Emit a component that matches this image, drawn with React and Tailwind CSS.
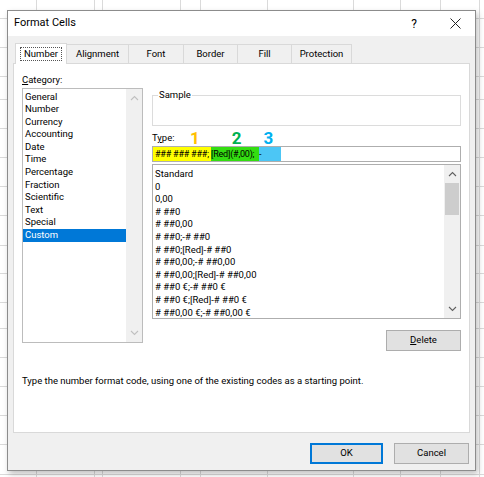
import React from "react";

const categories = [
  "General",
  "Number",
  "Currency",
  "Accounting",
  "Date",
  "Time",
  "Percentage",
  "Fraction",
  "Scientific",
  "Text",
  "Special",
  "Custom",
];

const formats = [
  "Standard",
  "0",
  "0,00",
  "# ##0",
  "# ##0,00",
  "# ##0;-# ##0",
  "# ##0;[Red]-# ##0",
  "# ##0,00;-# ##0,00",
  "# ##0,00;[Red]-# ##0,00",
  "# ##0 €;-# ##0 €",
  "# ##0 €;[Red]-# ##0 €",
  "# ##0,00 €;-# ##0,00 €",
];

const tabs = ["Number", "Alignment", "Font", "Border", "Fill", "Protection"];
const tabWidths = ["w-[52px]", "w-[62px]", "w-[55px]", "w-[54px]", "w-[54px]", "w-[60px]"];

function Chevron({ up, color = "#606060" }) {
  return (
    <svg width="9" height="6" viewBox="0 0 9 6">
      <polyline
        points={up ? "1,5 4.5,1.5 8,5" : "1,1 4.5,4.5 8,1"}
        fill="none"
        stroke={color}
        strokeWidth="1.1"
      />
    </svg>
  );
}

function SheetGrid() {
  const vx = [36, 94, 102, 180, 200, 267, 353, 400, 440, 479];
  const hy = [18, 47, 76, 99, 128, 157, 186, 215, 245, 273, 302, 328, 357, 386, 415, 444, 474];
  return (
    <svg className="absolute inset-0" width="484" height="477">
      {vx.map((x) => (
        <line key={"v" + x} x1={x + 0.5} y1="0" x2={x + 0.5} y2="477" stroke="#dadada" />
      ))}
      {hy.map((y) => (
        <line key={"h" + y} x1="0" y1={y + 0.5} x2="484" y2={y + 0.5} stroke="#dadada" />
      ))}
    </svg>
  );
}

export default function App() {
  return (
    <div
      className="relative w-[484px] h-[477px] bg-white overflow-hidden text-[#000] text-[9.5px]"
      style={{ fontFamily: "Roboto, 'Noto Sans', sans-serif" }}
    >
      <SheetGrid />

      {/* dialog */}
      <div className="absolute left-[7px] top-[10px] w-[469px] h-[461px] bg-[#f0f0f0] border border-[#8c8c8c] shadow-[2px_3px_6px_rgba(0,0,0,0.25)] flex flex-col">
        {/* title bar */}
        <div className="h-[25px] bg-white flex items-center pl-[6px] pr-[14px]">
          <span className="text-[11px]">Format Cells</span>
          <span className="ml-auto text-[12px] mr-[33px]">?</span>
          <svg width="11" height="11" viewBox="0 0 11 11">
            <path d="M0.5 0.5 L10.5 10.5 M10.5 0.5 L0.5 10.5" stroke="#222" strokeWidth="1" />
          </svg>
        </div>

        <div className="px-[5px] pt-[8px] flex flex-col">
          {/* tabs */}
          <div className="flex h-[19px] items-end">
            {tabs.map((t, i) =>
              i === 0 ? (
                <div
                  key={t}
                  className={`${tabWidths[i]} h-[21px] -mb-px bg-white border border-b-0 border-[#d9d9d9] flex items-center justify-center z-10 relative ml-[2px]`}
                >
                  <span className="border border-dotted border-[#555] px-[3px] leading-[12px]">{t}</span>
                </div>
              ) : (
                <div
                  key={t}
                  className={`${tabWidths[i]} h-[19px] bg-[#f0f0f0] border border-l-0 border-b-0 border-[#d9d9d9] flex items-center justify-center`}
                >
                  {t}
                </div>
              )
            )}
          </div>

          {/* panel */}
          <div className="h-[370px] bg-white border border-[#d9d9d9] pl-[8px] pr-[6px] pt-[10px] flex flex-col">
            <div className="flex gap-[9px]">
              {/* category column */}
              <div className="w-[121px] flex flex-col">
                <div className="h-[14px] leading-[12px]">
                  <span className="underline">C</span>ategory:
                </div>
                <div className="h-[255px] border border-[#bcbcbc] flex">
                  <div className="flex-1 pt-[1.5px]">
                    {categories.map((c) => (
                      <div
                        key={c}
                        className={`h-[12.6px] leading-[12.6px] pl-[2px] ${
                          c === "Custom" ? "bg-[#0078d7] text-white" : ""
                        }`}
                      >
                        {c}
                      </div>
                    ))}
                  </div>
                  <div className="w-[16px] bg-[#f0f0f0] flex flex-col items-center justify-between py-[6px]">
                    <Chevron up color="#c0c0c0" />
                    <Chevron color="#c0c0c0" />
                  </div>
                </div>
              </div>

              {/* right column */}
              <div className="w-[309px] flex flex-col">
                <div className="relative mt-[21px] h-[31px] border border-[#dcdcdc]">
                  <span className="absolute left-[5px] -top-[7px] bg-white px-px leading-[12px]">Sample</span>
                </div>

                <div className="flex items-center h-[16px] mt-[4px]">
                  <span className="w-[38px]">
                    T<span className="underline">y</span>pe:
                  </span>
                  <span className="text-[17px] font-bold text-[#ffc000] leading-[18px]">1</span>
                  <span className="text-[17px] font-bold text-[#00b050] leading-[18px] ml-[32px]">2</span>
                  <span className="text-[17px] font-bold text-[#00b0f0] leading-[18px] ml-[22px]">3</span>
                </div>

                <div className="h-[16px] border border-[#aeaeae] flex items-stretch text-[9px] tracking-[-0.2px]">
                  <span className="w-[58px] bg-[#ffff00] pl-[2px] leading-[14px] whitespace-nowrap">
                    ### ### ###;
                  </span>
                  <span className="w-[48px] bg-[#33dd11] leading-[14px] whitespace-nowrap">[Red](#,00);</span>
                  <span className="w-[22px] bg-[#4cc6f5] leading-[14px]">-</span>
                </div>

                <div className="mt-[2px] h-[155px] border border-[#aeaeae] flex">
                  <div className="flex-1 pt-[3px] overflow-hidden">
                    {formats.map((f) => (
                      <div key={f} className="h-[12.6px] leading-[12.6px] pl-[2px] whitespace-nowrap">
                        {f}
                      </div>
                    ))}
                  </div>
                  <div className="w-[16px] bg-[#f0f0f0] flex flex-col items-center">
                    <div className="h-[18px] flex items-center">
                      <Chevron up />
                    </div>
                    <div className="w-[14px] h-[32px] bg-[#cdcdcd]" />
                    <div className="mt-auto h-[18px] flex items-center">
                      <Chevron />
                    </div>
                  </div>
                </div>

                <div className="flex justify-end mt-[11px]">
                  <button className="w-[75px] h-[21px] bg-[#e1e1e1] border border-[#adadad] text-[9.5px]">
                    <span className="underline">D</span>elete
                  </button>
                </div>
              </div>
            </div>

            <div className="mt-[24px] leading-[12px]">
              Type the number format code, using one of the existing codes as a starting point.
            </div>
          </div>

          {/* footer buttons */}
          <div className="flex justify-end gap-[11px] mt-[10px] pr-px">
            <button className="w-[73px] h-[21px] bg-[#e1e1e1] border-2 border-[#0078d7] text-[9.5px]">OK</button>
            <button className="w-[75px] h-[21px] bg-[#e1e1e1] border border-[#adadad] text-[9.5px]">Cancel</button>
          </div>
        </div>
      </div>
    </div>
  );
}
